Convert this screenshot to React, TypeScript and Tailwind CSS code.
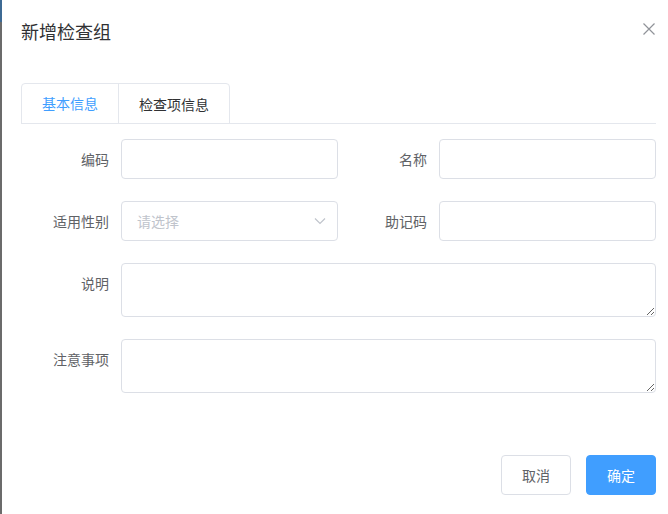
import { useState } from "react";

const FONT = { fontFamily: '"Helvetica Neue", "Noto Sans CJK SC", sans-serif' };

function Label({ text, top }: { text: string; top?: boolean }) {
  return (
    <label
      className={`w-[100px] shrink-0 pr-3 text-right text-sm leading-[40px] text-[#606266] ${top ? "self-start" : ""}`}
    >
      {text}
    </label>
  );
}

function Input() {
  return (
    <input
      type="text"
      className="h-10 w-full min-w-0 rounded border border-[#dcdfe6] bg-white px-[15px] text-sm text-[#606266] outline-none"
    />
  );
}

export default function App() {
  const [tab, setTab] = useState(0);
  const tabs = ["基本信息", "检查项信息"];

  return (
    <div className="flex h-[514px] w-[668px] bg-white" style={FONT}>
      {/* page edge behind the dialog */}
      <div className="flex w-[2px] shrink-0 flex-col">
        <div className="h-[22px] bg-[#3d6a94]" />
        <div className="flex-1 bg-[#6b6b6b]" />
      </div>

      <div className="flex flex-1 flex-col pl-[19px] pr-3">
        {/* Header */}
        <div className="flex items-start justify-between pt-[19px]">
          <h2 className="text-lg leading-6 text-[#303133]">新增检查组</h2>
          <button className="mt-[3px] text-[#909399]">
            <svg width="14" height="14" viewBox="0 0 14 14" fill="none" stroke="currentColor" strokeWidth="1.2">
              <path d="M1.5 1.5L12.5 12.5M12.5 1.5L1.5 12.5" />
            </svg>
          </button>
        </div>

        {/* Tabs */}
        <div className="mt-[40px] flex border-b border-[#e4e7ed]">
          <div className="-mb-px flex rounded-t border border-[#e4e7ed]">
            {tabs.map((t, i) => (
              <button
                key={t}
                onClick={() => setTab(i)}
                className={`h-[39px] px-5 text-sm ${i > 0 ? "border-l border-[#e4e7ed]" : ""} ${
                  tab === i ? "border-b border-b-white text-[#409eff]" : "text-[#303133]"
                }`}
              >
                {t}
              </button>
            ))}
          </div>
        </div>

        {/* Form */}
        <div className="mt-[15px] flex flex-col gap-[22px]">
          <div className="grid grid-cols-2 gap-x-px">
            <div className="flex items-center">
              <Label text="编码" />
              <Input />
            </div>
            <div className="flex items-center">
              <Label text="名称" />
              <Input />
            </div>
          </div>
          <div className="grid grid-cols-2 gap-x-px">
            <div className="flex items-center">
              <Label text="适用性别" />
              <div className="relative w-full">
                <input
                  readOnly
                  placeholder="请选择"
                  className="h-10 w-full rounded border border-[#dcdfe6] bg-white px-[15px] text-sm text-[#606266] outline-none placeholder:text-[#c0c4cc]"
                />
                <svg
                  className="absolute right-[12px] top-1/2 -translate-y-1/2 text-[#c0c4cc]"
                  width="12"
                  height="8"
                  viewBox="0 0 12 8"
                  fill="none"
                  stroke="currentColor"
                  strokeWidth="1.2"
                >
                  <path d="M1 1.5L6 6.5L11 1.5" />
                </svg>
              </div>
            </div>
            <div className="flex items-center">
              <Label text="助记码" />
              <Input />
            </div>
          </div>
          <div className="flex">
            <Label text="说明" top />
            <textarea className="h-[54px] w-full rounded border border-[#dcdfe6] bg-white px-[15px] py-[5px] text-sm outline-none" />
          </div>
          <div className="flex">
            <Label text="注意事项" top />
            <textarea className="h-[54px] w-full rounded border border-[#dcdfe6] bg-white px-[15px] py-[5px] text-sm outline-none" />
          </div>
        </div>

        {/* Footer */}
        <div className="mt-[62px] flex justify-end gap-[15px]">
          <button className="h-10 w-[70px] rounded border border-[#dcdfe6] bg-white text-sm text-[#606266]">取消</button>
          <button className="h-10 w-[70px] rounded border border-[#409eff] bg-[#409eff] text-sm text-white">确定</button>
        </div>
      </div>
    </div>
  );
}
